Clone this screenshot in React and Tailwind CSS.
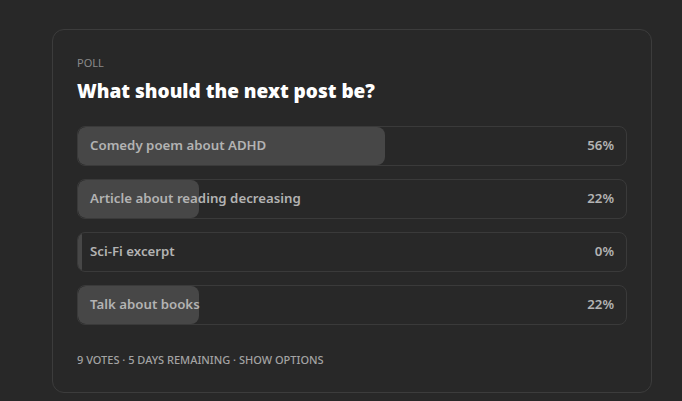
const options = [
  { label: "Comedy poem about ADHD", pct: 56 },
  { label: "Article about reading decreasing", pct: 22 },
  { label: "Sci-Fi excerpt", pct: 0 },
  { label: "Talk about books", pct: 22 },
];

export default function App() {
  return (
    <div
      className="min-h-[401px] w-full bg-[#282828] pt-[29px] pl-[52px] pr-[30px]"
      style={{ fontFamily: '"Noto Sans", "Open Sans", sans-serif' }}
    >
      <div className="w-[600px] rounded-[12px] border border-[#3c3c3c] px-6 pt-[25px] pb-6">
        <p className="text-[11px] leading-4 uppercase text-[#8a8a8a] mb-2">Poll</p>
        <h2 className="text-[19px] leading-6 font-black text-white mb-[23px]">
          What should the next post be?
        </h2>

        <div className="flex flex-col gap-[13px]">
          {options.map((opt) => (
            <div
              key={opt.label}
              className="relative h-10 rounded-[8px] border border-[#3a3a3a] overflow-hidden"
            >
              <div
                className="absolute left-0 top-0 bottom-0 bg-[#474747] rounded-[8px]"
                style={{ width: opt.pct === 0 ? "4px" : `${opt.pct}%` }}
              />
              <div className="relative flex h-full items-center justify-between px-3 text-[13.25px] font-semibold text-[#b3b3b3]">
                <span>{opt.label}</span>
                <span>{opt.pct}%</span>
              </div>
            </div>
          ))}
        </div>

        <p className="mt-[27px] text-[11px] leading-4 uppercase font-medium text-[#a3a3a3]">
          9 votes · 5 days remaining · Show options
        </p>
      </div>
    </div>
  );
}
